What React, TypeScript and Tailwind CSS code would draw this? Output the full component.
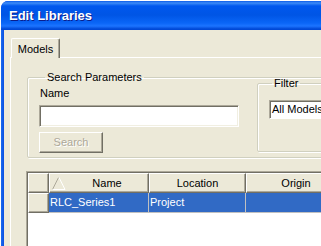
import React from 'react';

const beige = 'bg-[#ECE9D8]';

function HeaderCell({ w, children, sort }: { w: string; children?: React.ReactNode; sort?: boolean }) {
  return (
    <div
      className={`${w} h-[20px] shrink-0 flex items-center ${beige} border-t border-l border-t-white border-l-white border-r border-b border-r-[#716F64] border-b-[#716F64] shadow-[inset_-1px_-1px_0_#ACA899]`}
    >
      {sort && (
        <svg width="14" height="13" viewBox="0 0 14 13" className="ml-[2px] shrink-0">
          <line x1="0.5" y1="12.5" x2="6.5" y2="0.5" stroke="#ACA899" />
          <line x1="7" y1="0.5" x2="13" y2="12.5" stroke="#FFFFFF" />
          <line x1="0.5" y1="12.5" x2="13" y2="12.5" stroke="#FFFFFF" />
        </svg>
      )}
      <span className="flex-1 text-center text-[11px] text-black leading-none">{children}</span>
    </div>
  );
}

export default function App() {
  return (
    <div className="w-[321px] h-[246px] overflow-hidden bg-white font-['Liberation_Sans',Arial,sans-serif]">
      <div className="ml-[1px] mt-[1px] w-[440px] h-[300px] rounded-tl-[7px] overflow-hidden flex flex-col bg-[#0831D9]">
        {/* title bar */}
        <div className="h-[29px] shrink-0 flex items-center pl-[8px] bg-[linear-gradient(to_bottom,#0A5BE8_0px,#3D8CF7_2px,#0058EE_5px,#0055E5_14px,#0A66F7_22px,#1C74FF_25px,#0048D6_28px)]">
          <span className="text-white font-bold text-[13px] [text-shadow:1px_1px_0_#0A1E8C]">Edit Libraries</span>
        </div>
        <div className="flex-1 flex">
          <div className="w-[3px] shrink-0 bg-[linear-gradient(to_right,#1A6CF0,#0B4FE0)]" />
          <div className={`flex-1 ${beige} pl-[6px] pt-[8px] flex flex-col`}>
            {/* tab */}
            <div className="flex">
              <div
                className={`ml-[1px] w-[49px] h-[20px] -mb-[1px] relative z-10 ${beige} border-t border-l border-t-white border-l-white border-r border-r-[#716F64] shadow-[inset_-1px_0_0_#ACA899] rounded-t-[2px] flex justify-center pt-[4px]`}
              >
                <span className="text-[11px] text-black leading-[13px]">Models</span>
              </div>
            </div>
            {/* panel */}
            <div className={`flex-1 border-t border-l border-white ${beige} pl-[16px] flex flex-col`}>
              <fieldset className="mt-[13px] w-[400px] h-[87px] border border-[#D0D0BF] shadow-[inset_1px_1px_0_white,1px_1px_0_white] rounded-[2px] px-[11px] flex">
                <legend className="ml-[6px] px-[2px] text-[11px] leading-[13px] text-black">Search Parameters</legend>
                <div className="flex">
                  <div className="w-[200px] flex flex-col">
                    <div className="mt-[3px] pl-[1px] text-[11px] leading-[13px] text-black">Name</div>
                    <div className="mt-[5px] h-[22px] bg-white border border-t-[#ACA899] border-l-[#ACA899] border-b-white border-r-white shadow-[inset_1px_1px_0_#716F64,inset_-1px_-1px_0_#F1EFE2]" />
                    <div className="mt-[5px] w-[64px] h-[21px] flex items-center justify-center border border-t-white border-l-white border-r-[#716F64] border-b-[#716F64] shadow-[inset_-1px_-1px_0_#ACA899]">
                      <span className="text-[11px] text-[#ACA899] [text-shadow:1px_1px_0_white]">Search</span>
                    </div>
                  </div>
                  <fieldset className="ml-[18px] -mt-[7px] w-[120px] h-[75px] border border-[#D0D0BF] shadow-[inset_1px_1px_0_white,1px_1px_0_white] rounded-[2px] pl-[11px]">
                    <legend className="ml-[3px] px-[2px] text-[11px] leading-[13px] text-black">Filter</legend>
                    <div className="mt-[10px] h-[19px] bg-white border border-t-[#ACA899] border-l-[#ACA899] border-b-white border-r-white shadow-[inset_1px_1px_0_#716F64] flex items-center pl-[2px]">
                      <span className="text-[11px] text-black whitespace-nowrap">All Models</span>
                    </div>
                  </fieldset>
                </div>
              </fieldset>

              {/* list view */}
              <div className="mt-[13px] -ml-[1px] flex-1 bg-white border-t border-l border-[#ACA899] shadow-[inset_1px_1px_0_#716F64] pl-[1px] pt-[1px] flex flex-col">
                <div className="flex">
                  <HeaderCell w="w-[21px]" />
                  <HeaderCell w="w-[100px]" sort>Name</HeaderCell>
                  <HeaderCell w="w-[97px]">Location</HeaderCell>
                  <HeaderCell w="w-[100px]">Origin</HeaderCell>
                </div>
                <div className="flex h-[20px]">
                  <div className={`w-[21px] shrink-0 ${beige} border-t border-l border-t-white border-l-white border-r border-b border-r-[#716F64] border-b-[#716F64] shadow-[inset_-1px_-1px_0_#ACA899]`} />
                  <div className="w-[100px] shrink-0 bg-[#316AC5] border-r border-b border-[#C0C0C0] flex items-center pl-[1px]">
                    <span className="text-[11px] text-white">RLC_Series1</span>
                  </div>
                  <div className="w-[97px] shrink-0 bg-[#316AC5] border-r border-b border-[#C0C0C0] flex items-center pl-[1px]">
                    <span className="text-[11px] text-white">Project</span>
                  </div>
                  <div className="w-[100px] shrink-0 bg-[#316AC5] border-b border-[#C0C0C0]" />
                </div>
              </div>
            </div>
          </div>
        </div>
      </div>
    </div>
  );
}
